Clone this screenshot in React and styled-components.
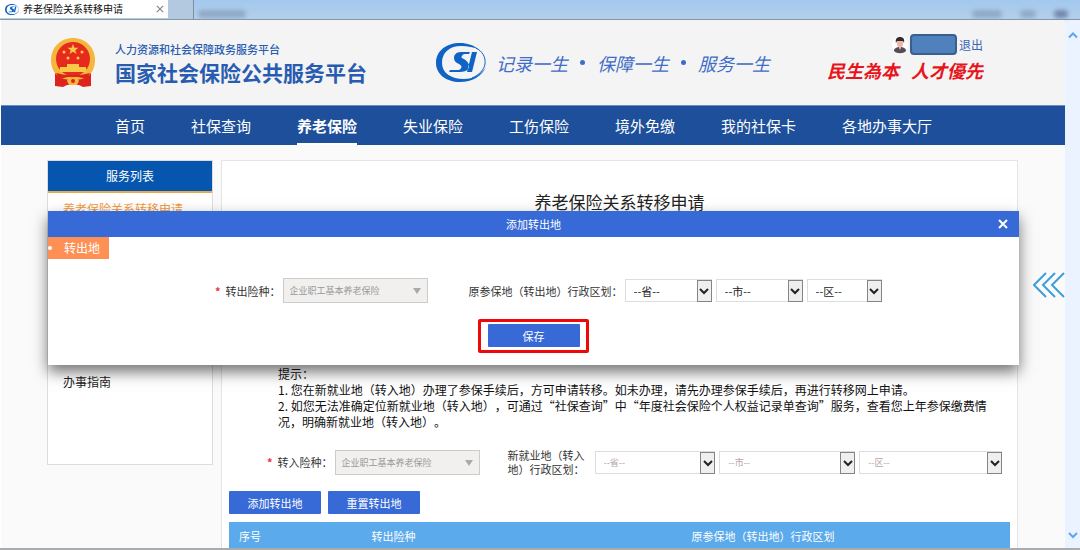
import React from 'react'
import styled, { createGlobalStyle } from 'styled-components';

const GlobalStyle = createGlobalStyle`
    * {
        box-sizing: border-box;
    }
    body {
        margin: 0;
        background: #fafafa;
        color: #222;
        font-family: "Noto Sans CJK SC", "Noto Sans", sans-serif;
        font-size: 12px;
        text-spacing-trim: space-all;
    }
    button, select {
        font-family: inherit;
        margin: 0;
    }
    h1, h2, p, ul {
        margin: 0;
        padding: 0;
        font-weight: 400;
    }
`

const Window = styled.div`
    display: flex;
    flex-direction: column;
    height: 100vh;
    overflow: hidden;
    border-bottom: 2px solid #a9abad;
`

const TabBar = styled.div`
    display: flex;
    flex: none;
    height: 20px;
    border-bottom: 1px solid #8795a5;
    background: linear-gradient(#a3c8ee, #b4cfeb);
`

const Tab = styled.div`
    display: flex;
    align-items: center;
    gap: 4px;
    width: 168px;
    height: 18px;
    padding: 0 4px 0 5px;
    background: #fff;
    font-size: 10px;
    line-height: 18px;
    color: #111;
    span {
        flex: 1;
    }
`

const TabClose = styled.button`
    display: flex;
    padding: 0;
    border: 0;
    background: none;
    color: #888;
`

const NewTab = styled.button`
    width: 26px;
    padding: 0;
    border: 0;
    border-right: 1px solid #7c8ea3;
    background: #b3c9e0;
`

const Toolbar = styled.div`
    display: flex;
    flex: 1;
    align-items: flex-end;
    justify-content: space-between;
    padding: 0 12px 1px 4px;
    filter: blur(2px);
`

const Smudges = styled.div`
    display: flex;
    gap: 18px;
`

const Smudge = styled.i`
    width: ${({ $w }) => $w}px;
    height: 8px;
    border-radius: 4px;
    background: ${({ $color }) => $color || '#8fa9c6'};
`

const Viewport = styled.div`
    display: flex;
    flex: 1;
    min-height: 0;
`

const Page = styled.div`
    position: relative;
    flex: 1;
    min-width: 0;
    overflow: hidden;
    border-left: 1px solid #fff;
`

const ScrollTrack = styled.div`
    display: flex;
    flex-direction: column;
    justify-content: space-between;
    align-items: center;
    width: 15px;
    padding: 10px 0 8px;
    background: #eaf3ff;
    color: #5da5ee;
`

const Header = styled.header`
    display: flex;
    align-items: center;
    height: 85px;
    padding: 0 82px 0 49px;
    background: #f4f4f4;
`

const Brand = styled.div`
    display: flex;
    align-items: center;
    gap: 18px;
    width: 386px;
    color: #285cb0;
`

const BrandSub = styled.p`
    font-size: 11px;
    line-height: 18px;
    font-weight: 500;
`

const BrandName = styled.p`
    font-size: 21px;
    line-height: 28px;
    font-weight: 700;
`

const Motto = styled.div`
    display: flex;
    flex: 1;
    align-items: center;
    gap: 10px;
`

const MottoText = styled.p`
    display: flex;
    align-items: center;
    gap: 12px;
    font-size: 18px;
    font-style: italic;
    color: #3f6cc8;
`

const Dot = styled.i`
    width: 5px;
    height: 5px;
    border-radius: 50%;
    background: #3f6cc8;
`

const Account = styled.div`
    display: flex;
    flex-direction: column;
    align-items: flex-end;
    padding-bottom: 8px;
`

const UserLine = styled.div`
    display: flex;
    align-items: center;
    gap: 2px;
    height: 22px;
    a {
        font-size: 12px;
        color: #3a66b4;
        text-decoration: none;
    }
`

const UserName = styled.span`
    width: 47px;
    height: 21px;
    border: 2px solid #3a5f8f;
    border-radius: 4px;
    background: #4f81bd;
`

const Slogan = styled.p`
    display: flex;
    gap: 12px;
    font-size: 18px;
    line-height: 28px;
    font-style: italic;
    font-weight: 700;
    color: #e8141b;
`

const Nav = styled.nav`
    display: flex;
    gap: 46px;
    height: 40px;
    padding-left: 114px;
    background: #1d4f9b;
    border-top: 1px solid #6a8cbf;
`

const NavLink = styled.a`
    height: 39px;
    border-bottom: 2px solid ${({ $active }) => ($active ? '#fff' : 'transparent')};
    color: #fff;
    font-size: 15px;
    font-weight: ${({ $active }) => ($active ? 700 : 400)};
    line-height: 39px;
    text-decoration: none;
    white-space: nowrap;
`

const Columns = styled.div`
    display: flex;
    align-items: flex-start;
    gap: 8px;
    padding: 15px 47px 0 46px;
`

const Sidebar = styled.aside`
    width: 166px;
    flex: none;
    border: 1px solid #ddd;
    background: #fff;
`

const SidebarTitle = styled.h2`
    background: #0655ae;
    border-bottom: 2px solid #e9a94f;
    color: #fff;
    font-size: 12px;
    line-height: 30px;
    text-align: center;
`

const ServiceList = styled.ul`
    display: flex;
    flex-direction: column;
    justify-content: space-between;
    height: 271px;
    padding: 4px 15px 70px;
    list-style: none;
    line-height: 24px;
    a {
        color: #222;
        text-decoration: none;
    }
    a[aria-current] {
        color: #f39a3c;
    }
`

const Main = styled.main`
    flex: 1;
    min-width: 0;
    padding: 28px 7px 0;
    border: 1px solid #e4e4e4;
    border-bottom: 0;
    background: #fff;
`

const PageTitle = styled.h1`
    font-size: 17px;
    line-height: 26px;
    text-align: center;
`

const Tips = styled.div`
    padding: 151px 8px 0 49px;
    line-height: 16px;
    color: #111;
`

const Fields = styled.div`
    display: flex;
    align-items: center;
    gap: 2px;
    padding: ${({ $pad }) => $pad};
`

const Label = styled.label`
    display: flex;
    gap: 5px;
    margin-left: ${({ $before }) => $before || 0}px;
    font-size: 11px;
    line-height: 14px;
    color: #333;
    white-space: nowrap;
    b {
        color: #e33;
    }
`

const Region = styled.div`
    display: flex;
    flex: 1;
    gap: 4px;
    margin-left: ${({ $before }) => $before || 0}px;
`

const Picker = styled.span`
    position: relative;
    display: flex;
    width: ${({ $w }) => $w}px;
    flex: ${({ $grow }) => ($grow ? `${$grow} 1 0` : 'none')};
    height: ${({ $locked }) => ($locked ? 25 : 23)}px;
    select {
        appearance: none;
        width: 100%;
        padding: 0 18px 0 ${({ $locked }) => ($locked ? 6 : 8)}px;
        border: 1px solid ${({ $locked }) => ($locked ? '#ccc' : '#ddd')};
        border-radius: 0;
        background: ${({ $locked }) => ($locked ? '#f1f0ef' : '#fff')};
        color: ${({ $locked, $faint }) => ($locked ? '#999' : $faint ? '#b5a5a5' : '#222')};
        font-size: ${({ $locked, $faint }) => ($locked || $faint ? 9 : 11)}px;
        opacity: 1;
    }
`

const Arrow = styled.span`
    position: absolute;
    right: 0;
    top: 1px;
    bottom: 0;
    display: flex;
    align-items: center;
    justify-content: center;
    width: ${({ $locked }) => ($locked ? 22 : 15)}px;
    border: ${({ $locked }) => ($locked ? 0 : '1px solid #858585')};
    background: ${({ $locked }) => ($locked ? 'none' : '#efefef')};
    pointer-events: none;
`

const Button = styled.button`
    width: 92px;
    height: 23px;
    padding: 0;
    border: 0;
    border-radius: 1px;
    background: #376ad6;
    color: #fff;
    font-size: 11px;
`

const Actions = styled.div`
    display: flex;
    gap: 7px;
    padding-bottom: 8px;
`

const Table = styled.table`
    width: 100%;
    border-collapse: collapse;
    table-layout: fixed;
    th {
        height: 27px;
        padding: 0;
        background: #5baaec;
        color: #fff;
        font-size: 11px;
        font-weight: 400;
    }
    th:first-child {
        width: 42px;
    }
    th:nth-child(2) {
        width: 245px;
    }
`

const Dialog = styled.section`
    position: absolute;
    top: 191px;
    left: 47px;
    right: 46px;
    height: 154px;
    background: #fff;
    box-shadow: 0 7px 14px rgba(0, 0, 0, 0.55);
`

const DialogBar = styled.div`
    display: grid;
    grid-template-columns: 32px 1fr 32px;
    align-items: center;
    height: 26px;
    background: #376ad6;
    color: #fff;
    h2 {
        grid-column: 2;
        font-size: 11px;
        text-align: center;
    }
    button {
        display: flex;
        justify-content: center;
        padding: 0;
        border: 0;
        background: none;
        color: #fff;
    }
`

const Tag = styled.p`
    display: flex;
    align-items: center;
    gap: 12px;
    width: 61px;
    height: 22px;
    background: #ff9055;
    color: #fff;
    line-height: 22px;
    white-space: nowrap;
    &::before {
        content: '';
        width: 4px;
        height: 4px;
        border-radius: 50%;
        background: #fff;
    }
`

const Highlight = styled.div`
    display: flex;
    justify-content: center;
    width: 111px;
    margin: 16px auto 0;
    padding: 2px 0 3px;
    border: 3px solid #f00707;
    border-radius: 2px;
`

const SideToggle = styled.button`
    position: absolute;
    top: 252px;
    right: 0;
    display: flex;
    padding: 0;
    border: 0;
    background: none;
`

const navItems = ['首页', '社保查询', '养老保险', '失业保险', '工伤保险', '境外免缴', '我的社保卡', '各地办事大厅'];

const Chevron = ({ up, size = 10 }) => (
    <svg width={size} height={size} viewBox="0 0 10 10" fill="none" stroke="currentColor" strokeWidth="2">
        <path d={up ? 'M1 7.5 5 3.5 9 7.5' : 'M1 3 5 7 9 3'} />
    </svg>
)

const Cross = ({ size, width }) => (
    <svg width={size} height={size} viewBox="0 0 10 10" stroke="currentColor" strokeWidth={width}>
        <path d="M1 1 9 9M9 1 1 9" />
    </svg>
)

const SiLogo = ({ width, height }) => (
    <svg width={width} height={height} viewBox="0 0 50 39">
        <path fill="#0f63c4" fillRule="evenodd" d="M43 7C38 2 31 0 24 0 10 0 0 8 0 20c0 11 10 19 24 19 12 0 22-6 26-15-5 8-13 12-22 12C15 36 6 30 6 20 6 9 14 3 25 3c7 0 13 1 18 4Z" />
        <path fill="none" stroke="#0f63c4" strokeWidth="1" d="M40 5c6 3 10 9 9 16-1 6-6 11-13 14" />
        <path fill="#0f63c4" d="M34 9H25c-5 0-7 3-7 6 0 3 2 5 5 6 3 2 3 3 2 4-1 2-2 2-4 2h-7l-1 2h11c6 0 9-3 9-6 0-3-2-5-5-7-3-1-3-2-2-3 1-2 2-2 4-2h3l1-2ZM36 9h5l-5 20h-5l5-20Z" />
    </svg>
)

const Emblem = () => (
    <svg width="47" height="50" viewBox="0 0 47 50">
        <path fill="#dc241c" d="M5 34h36v14l-8 1-4-2H17l-4 2-8-1V34Z" />
        <path fill="#f5b63c" d="M23 0c12 0 22 9 22 22 0 8-3 13-8 17-4 2-8 3-14 3s-10-1-14-3c-5-4-8-9-8-17C1 9 11 0 23 0Z" />
        <circle cx="23" cy="21" r="17" fill="#e62a1d" />
        <path fill="#f9c846" d="m23 6 1.500 3.800h4l-3.200 2.400 1.200 3.800-3.500-2.300-3.500 2.300 1.200-3.800-3.200-2.400h4ZM17 26h12v3h7v5H10v-5h7Z" />
        <g fill="#f9c846">
            <circle cx="14" cy="14" r="1.500" />
            <circle cx="32" cy="14" r="1.500" />
            <circle cx="18" cy="20" r="1.500" />
            <circle cx="28" cy="20" r="1.500" />
        </g>
        <path fill="#dc241c" d="M6 35c5 1 9 2 13 2h8c4 0 8-1 13-2l-3 6-9-2h-10l-9 2Z" />
        <path fill="#f5b63c" d="M17 43c1-3 4-4 6-4s5 1 6 4l-2 4h-8Z" />
        <circle cx="23" cy="43" r="2" fill="#dc241c" />
    </svg>
)

const Avatar = () => (
    <svg width="16" height="18" viewBox="0 0 16 18">
        <circle cx="8" cy="9" r="8" fill="#fff" />
        <path fill="#564a55" d="M2 15c0-3 3-4 6-4s6 1 6 4c-3 3-9 3-12 0Z" />
        <path fill="#e9b9a5" d="M5 5h6v3c0 2-1 3-2 3v1l-1 2-1-2v-1c-1 0-2-1-2-3Z" />
        <path fill="#37262b" d="M4 7c-1-4 1-6 4-6s5 2 4 6l-1-2H5Z" />
    </svg>
)

const Select = ({ id, text, label, width, grow, locked, faint }) => (
    <Picker $w={width} $grow={grow} $locked={locked} $faint={faint}>
        <select id={id} aria-label={label} disabled={locked}>
            <option>{text}</option>
        </select>
        <Arrow $locked={locked}>
            {locked
                ? <svg width="8" height="6"><path fill="#aaa" d="M0 0h8L4 6Z" /></svg>
                : <Chevron />}
        </Arrow>
    </Picker>
)

const TransferDialog = () => (
    <Dialog role="dialog" aria-label="添加转出地">
        <DialogBar>
            <h2>添加转出地</h2>
            <button type="button" aria-label="关闭"><Cross size={10} width={2} /></button>
        </DialogBar>
        <Tag>转出地</Tag>
        <Fields $pad="19px 0 0 167px">
            <Label htmlFor="outType"><b>*</b>转出险种：</Label>
            <Select id="outType" text="企业职工基本养老保险" width={145} locked />
            <Label htmlFor="outProvince" $before={39}>原参保地（转出地）行政区划：</Label>
            <Region>
                <Select id="outProvince" text="--省--" width={87} />
                <Select label="市" text="--市--" width={87} />
                <Select label="区" text="--区--" width={75} />
            </Region>
        </Fields>
        <Highlight>
            <Button type="button">保存</Button>
        </Highlight>
    </Dialog>
)

const App = () => {
  return (
        <Window lang="zh-CN">
            <GlobalStyle />
            <TabBar>
                <Tab>
                    <SiLogo width={14} height={13} />
                    <span>养老保险关系转移申请</span>
                    <TabClose type="button" aria-label="关闭标签页"><Cross size={8} width={1.5} /></TabClose>
                </Tab>
                <NewTab type="button" aria-label="新标签页" />
                <Toolbar>
                    <Smudge $w={48} />
                    <Smudges>
                        <Smudge $w={30} />
                        <Smudge $w={16} />
                        <Smudge $w={14} $color="#7286ab" />
                    </Smudges>
                </Toolbar>
            </TabBar>
            <Viewport>
                <Page>
                    <Header>
                        <Brand>
                            <Emblem />
                            <div>
                                <BrandSub>人力资源和社会保障政务服务平台</BrandSub>
                                <BrandName>国家社会保险公共服务平台</BrandName>
                            </div>
                        </Brand>
                        <Motto>
                            <SiLogo width={50} height={39} />
                            <MottoText>
                                <span>记录一生</span><Dot />
                                <span>保障一生</span><Dot />
                                <span>服务一生</span>
                            </MottoText>
                        </Motto>
                        <Account>
                            <UserLine>
                                <Avatar />
                                <UserName />
                                <a href="#logout">退出</a>
                            </UserLine>
                            <Slogan><span>民生為本</span><span>人才優先</span></Slogan>
                        </Account>
                    </Header>
                    <Nav>
                        {navItems.map((item) => (
                            <NavLink key={item} href="#" $active={item === '养老保险'}>{item}</NavLink>
                        ))}
                    </Nav>
                    <Columns>
                        <Sidebar>
                            <SidebarTitle>服务列表</SidebarTitle>
                            <ServiceList>
                                <li><a href="#apply" aria-current="page">养老保险关系转移申请</a></li>
                                <li><a href="#guide">办事指南</a></li>
                            </ServiceList>
                        </Sidebar>
                        <Main>
                            <PageTitle>养老保险关系转移申请</PageTitle>
                            <Tips>
                                <p>提示：</p>
                                <p>1. 您在新就业地（转入地）办理了参保手续后，方可申请转移。如未办理，请先办理参保手续后，再进行转移网上申请。</p>
                                <p>2. 如您无法准确定位新就业地（转入地），可通过“社保查询”中“年度社会保险个人权益记录单查询”服务，查看您上年参保缴费情况，明确新就业地（转入地）。</p>
                            </Tips>
                            <Fields $pad="18px 8px 15px 38px">
                                <Label htmlFor="inType"><b>*</b>转入险种：</Label>
                                <Select id="inType" text="企业职工基本养老保险" width={145} locked />
                                <Label htmlFor="inProvince" $before={26}>
                                    <span>新就业地（转入<br />地）行政区划：</span>
                                </Label>
                                <Region $before={8}>
                                    <Select id="inProvince" text="--省--" grow={121} faint />
                                    <Select label="市" text="--市--" grow={136} faint />
                                    <Select label="区" text="--区--" grow={143} faint />
                                </Region>
                            </Fields>
                            <Actions>
                                <Button type="button">添加转出地</Button>
                                <Button type="button">重置转出地</Button>
                            </Actions>
                            <Table>
                                <thead>
                                    <tr><th>序号</th><th>转出险种</th><th>原参保地（转出地）行政区划</th></tr>
                                </thead>
                            </Table>
                        </Main>
                    </Columns>
                    <TransferDialog />
                    <SideToggle type="button" aria-label="展开">
                        <svg width="32" height="26" viewBox="0 0 32 26" fill="none" stroke="#3b9fd9" strokeWidth="2">
                            <path d="M13 1 1 13 13 25M22 1 10 13 22 25M31 1 19 13 31 25" />
                        </svg>
                    </SideToggle>
                </Page>
                <ScrollTrack>
                    <Chevron up />
                    <Chevron />
                </ScrollTrack>
            </Viewport>
        </Window>
  )
}

export default App
